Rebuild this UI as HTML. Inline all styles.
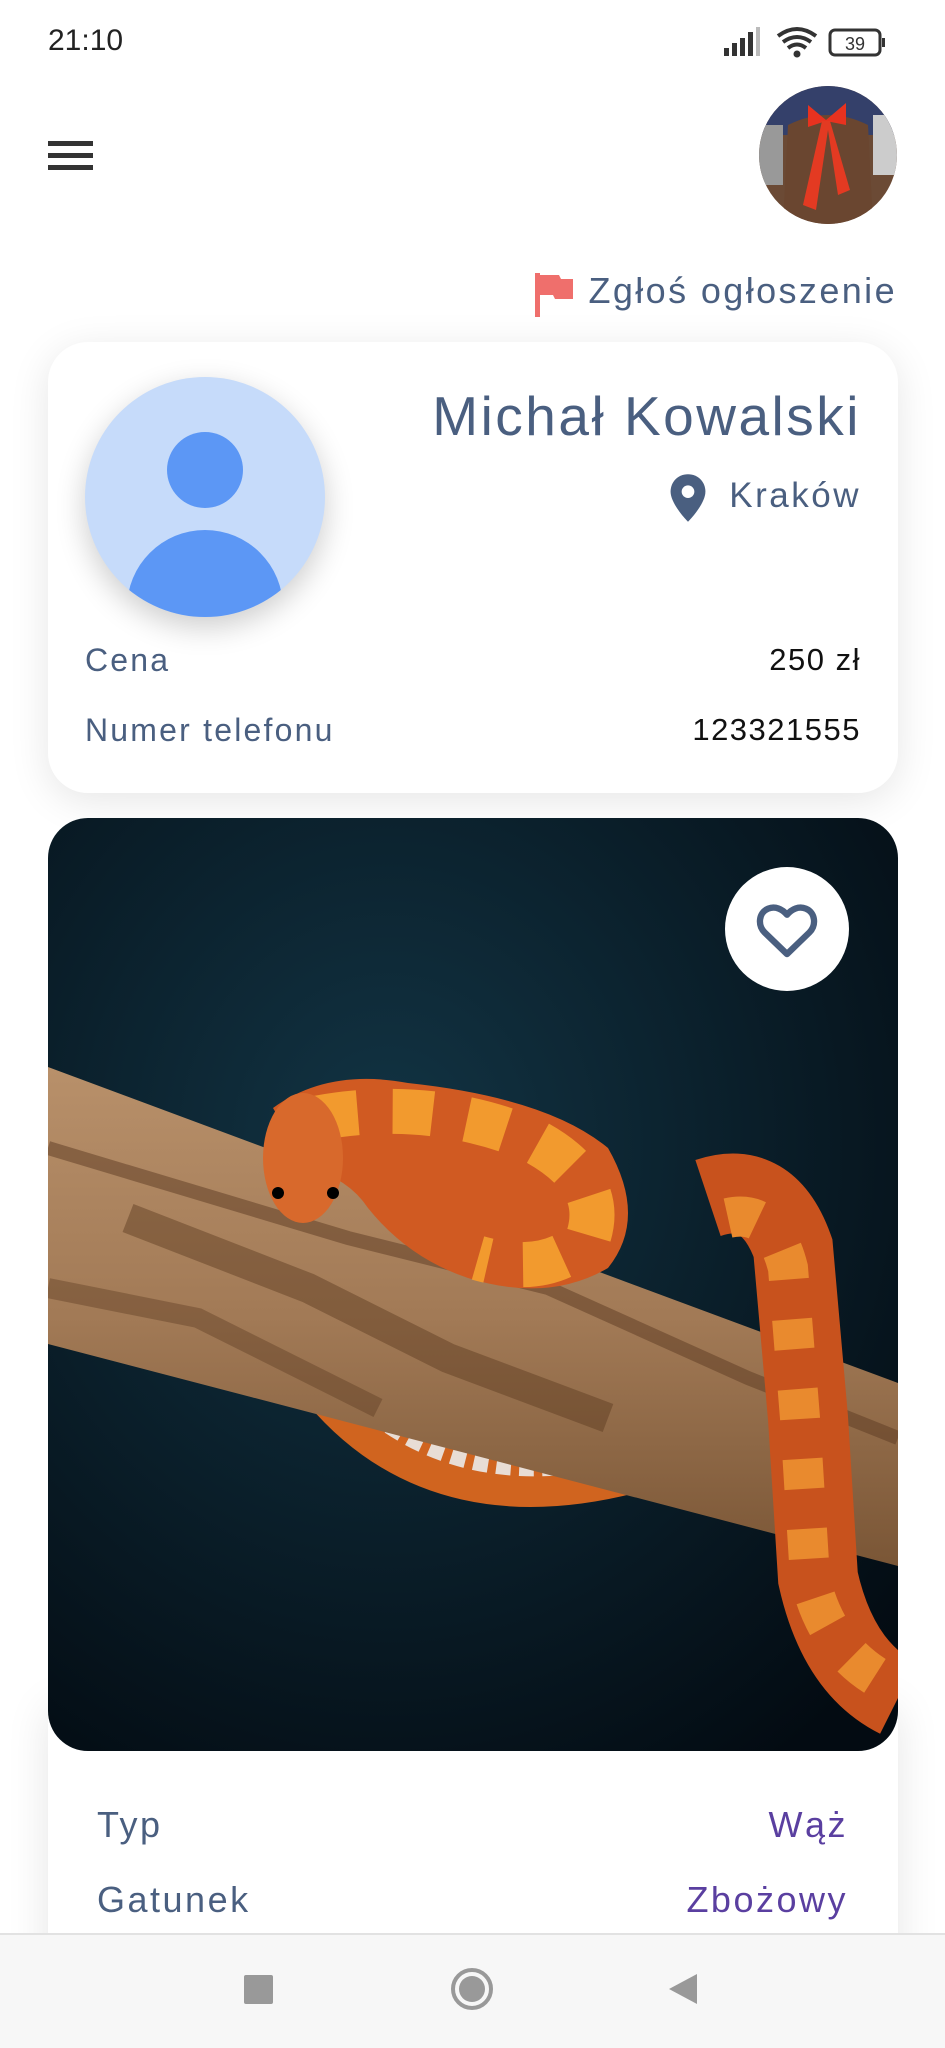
<!DOCTYPE html>
<html><head><meta charset="utf-8">
<style>
*{margin:0;padding:0;box-sizing:border-box}
body{width:945px;height:2048px;background:#fff;font-family:"Liberation Sans",sans-serif;position:relative;overflow:hidden}
.abs{position:absolute}
.card{position:absolute;left:48px;width:850px;background:#fff;border-radius:40px;box-shadow:0 8px 40px rgba(0,0,0,0.10)}
.lbl{color:#4a5f80;font-size:32px;letter-spacing:2.2px}
.val{color:#111;font-size:31px;letter-spacing:1.5px;text-align:right}
</style></head><body>
<div class="abs" style="left:48px;top:24px;font-size:30px;color:#222">21:10</div>
<svg class="abs" style="left:722px;top:26px" width="170" height="34" viewBox="0 0 170 34">
<rect x="2" y="22" width="5" height="8" fill="#333"/><rect x="10" y="17" width="5" height="13" fill="#333"/><rect x="18" y="12" width="5" height="18" fill="#333"/><rect x="26" y="6" width="5" height="24" fill="#333"/><rect x="34" y="1" width="4" height="29" fill="#bbb"/>
<path d="M56 10 Q75 -4 94 10 M61 16 Q75 6 89 16 M66 22 Q75 15 84 22" stroke="#333" stroke-width="4" fill="none"/><circle cx="75" cy="28" r="3.5" fill="#333"/>
<rect x="108" y="4" width="50" height="25" rx="5" fill="none" stroke="#333" stroke-width="3"/><rect x="160" y="12" width="3" height="9" fill="#333"/>
<text x="133" y="24" font-size="18" text-anchor="middle" fill="#333" font-family="Liberation Sans">39</text></svg>
<div class="abs" style="left:48px;top:141px;width:45px;height:5px;background:#333"></div>
<div class="abs" style="left:48px;top:153px;width:45px;height:5px;background:#333"></div>
<div class="abs" style="left:48px;top:165px;width:45px;height:5px;background:#333"></div>
<svg class="abs" style="left:758px;top:85px" width="140" height="140" viewBox="0 0 140 140">
<defs><clipPath id="c"><circle cx="70" cy="70" r="69"/></clipPath></defs>
<g clip-path="url(#c)"><rect width="140" height="140" fill="#6b4a35"/><rect width="140" height="50" fill="#34406a"/><rect x="0" y="40" width="25" height="60" fill="#999"/><rect x="115" y="30" width="25" height="60" fill="#ccc"/>
<path d="M30 40 Q70 20 110 40 L115 140 L25 140Z" fill="#6a4630"/>
<path d="M50 20 L68 35 L88 18 L88 40 L68 36 L50 42Z" fill="#e8321f"/><path d="M64 36 L45 120 L58 125 L70 45 L80 110 L92 105 L72 36Z" fill="#e33a22"/></g></svg>
<svg class="abs" style="left:535px;top:273px" width="40" height="44" viewBox="0 0 40 44"><rect x="0" y="0" width="5" height="44" fill="#ef6f6c"/><path d="M5 2 H24 L26 6 H38 V26 H20 L18 22 H5Z" fill="#ef6f6c"/></svg>
<div class="abs" style="right:48px;top:270px;font-size:36px;color:#4a5f80;letter-spacing:2.4px">Zgłoś ogłoszenie</div>

<div class="card" style="top:342px;height:451px">
<div class="abs" style="left:37px;top:35px;width:240px;height:240px;border-radius:50%;background:#c6dbfa;box-shadow:0 10px 30px rgba(0,0,0,0.2);overflow:hidden">
<div class="abs" style="left:82px;top:55px;width:76px;height:76px;border-radius:50%;background:#5c97f5"></div>
<div class="abs" style="left:42px;top:153px;width:156px;height:110px;border-radius:78px 78px 0 0;background:#5c97f5"></div></div>
<div class="abs" style="right:37px;top:42px;font-size:55px;color:#4a5f80;letter-spacing:2.5px">Michał Kowalski</div>
<svg class="abs" style="left:621px;top:132px" width="38" height="48" viewBox="0 0 24 30"><path d="M12 0C5.5 0 1 5 1 11c0 8 11 19 11 19s11-11 11-19C23 5 18.5 0 12 0z" fill="#4a5f80"/><circle cx="12" cy="11" r="4" fill="#fff"/></svg>
<div class="abs" style="right:37px;top:134px;font-size:35px;color:#4a5f80;letter-spacing:2.5px">Kraków</div>
<div class="abs lbl" style="left:37px;top:300px">Cena</div>
<div class="abs val" style="right:37px;top:300px">250 zł</div>
<div class="abs lbl" style="left:37px;top:370px">Numer telefonu</div>
<div class="abs val" style="right:37px;top:370px">123321555</div>
</div>

<div class="card" style="top:1700px;height:320px;border-radius:0"></div>
<div class="abs" style="left:48px;top:818px;width:850px;height:933px;border-radius:40px;overflow:hidden">
<svg width="850" height="933" viewBox="0 0 850 933">
<defs><radialGradient id="bg" cx="0.4" cy="0.35" r="0.8"><stop offset="0" stop-color="#123444"/><stop offset="1" stop-color="#030b12"/></radialGradient>
<linearGradient id="br" x1="0" y1="0" x2="0" y2="1"><stop offset="0" stop-color="#b8906a"/><stop offset="0.5" stop-color="#a27a56"/><stop offset="1" stop-color="#7a5636"/></linearGradient></defs>
<rect width="850" height="933" fill="url(#bg)"/>
<path d="M290 560 Q400 690 600 630" stroke="#d0641f" stroke-width="80" fill="none"/>
<path d="M330 585 Q430 665 580 625" stroke="#e8ddd5" stroke-width="40" fill="none" stroke-dasharray="14 8"/>
<path d="M0 249 L850 565 L850 748 L0 526Z" fill="url(#br)"/>
<path d="M0 330 L300 420 L500 470 L700 560 L850 620" stroke="#5c3a22" stroke-width="14" fill="none" opacity="0.5"/>
<path d="M80 400 L260 470 L400 540 L560 600" stroke="#5a3a20" stroke-width="30" fill="none" opacity="0.45"/>
<path d="M0 470 L150 500 L330 590" stroke="#5a3a20" stroke-width="20" fill="none" opacity="0.4"/>
<path d="M660 380 Q720 360 745 430 L760 600 L770 760 Q790 850 850 880" stroke="#c8521d" stroke-width="80" fill="none"/>
<path d="M680 400 Q725 390 740 450 L752 600 L762 760 Q780 840 850 870" stroke="#e98a2e" stroke-width="40" fill="none" stroke-dasharray="30 40"/>
<path d="M225 290 Q280 250 360 265 Q500 280 560 330 Q600 400 560 450 Q500 485 420 460 Q360 440 320 390 Q300 360 260 350Z" fill="#d05a22"/>
<path d="M270 300 Q380 280 480 320 Q560 360 540 420 Q500 460 430 440" stroke="#f29a2e" stroke-width="45" fill="none" stroke-dasharray="40 35"/>
<ellipse cx="255" cy="340" rx="40" ry="65" fill="#d8692c"/>
<circle cx="230" cy="375" r="6" fill="#000"/><circle cx="285" cy="375" r="6" fill="#000"/>
</svg></div>
<div class="abs" style="left:725px;top:867px;width:124px;height:124px;border-radius:50%;background:#fff"></div>
<svg class="abs" style="left:755px;top:900px" width="64" height="58" viewBox="0 0 24 22"><path d="M12 20.5 L3.5 12.3 C0.8 9.6 1.2 4.8 4.8 3.3 C7.5 2.2 10.2 3.4 12 5.6 C13.8 3.4 16.5 2.2 19.2 3.3 C22.8 4.8 23.2 9.6 20.5 12.3Z" fill="none" stroke="#4a5f80" stroke-width="2.4" stroke-linejoin="round"/></svg>

<div class="abs" style="left:97px;top:1804px;font-size:36px;color:#4a5f80;letter-spacing:2.5px">Typ</div>
<div class="abs" style="right:97px;top:1804px;font-size:36px;color:#5a3fa0;letter-spacing:2.5px">Wąż</div>
<div class="abs" style="left:97px;top:1879px;font-size:36px;color:#4a5f80;letter-spacing:2.5px">Gatunek</div>
<div class="abs" style="right:97px;top:1879px;font-size:36px;color:#5a3fa0;letter-spacing:2.5px">Zbożowy</div>

<div class="abs" style="left:0;top:1933px;width:945px;height:115px;background:#f7f7f7;border-top:2px solid #e2e2e2"></div>
<div class="abs" style="left:244px;top:1975px;width:29px;height:29px;background:#999;border-radius:2px"></div>
<div class="abs" style="left:451px;top:1968px;width:42px;height:42px;border-radius:50%;border:4px solid #999"></div>
<div class="abs" style="left:459px;top:1976px;width:26px;height:26px;border-radius:50%;background:#999"></div>
<svg class="abs" style="left:667px;top:1972px" width="32" height="34" viewBox="0 0 32 34"><path d="M30 2 L2 17 L30 32Z" fill="#999"/></svg>
</body></html>
